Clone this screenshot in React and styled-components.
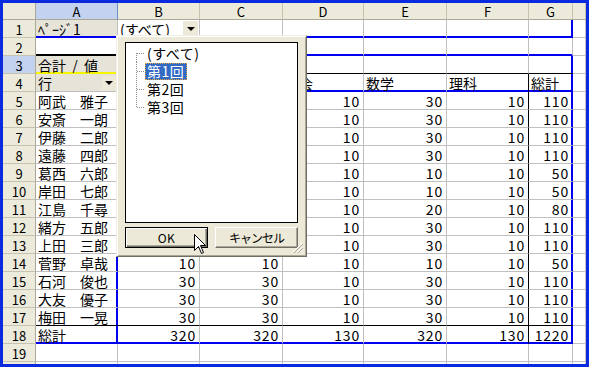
import React from "react";
import styled, { createGlobalStyle, css } from "styled-components";

const BLUE = "#0000ee";
const GRID = "#c0c0c0";
const HEAD_BG = "#ebeadb";
const FIELD_BG = "#e6e4d9";
const HILITE = "#c3d2ee";
const JP = `"Noto Sans CJK JP", "Liberation Sans", sans-serif`;

const GlobalStyle = createGlobalStyle`
  html, body {
    margin: 0;
    padding: 0;
    background: #fff;
  }
  body {
    font-family: ${JP};
    color: #000;
  }
`;

const Sheet = styled.div`
  position: relative;
  width: 589px;
  height: 367px;
  box-sizing: border-box;
  border: 3px solid #0a2ae0;
  display: grid;
  grid-template-columns: 33px 82px 82px 83px 81px 83px 82px 44px 1fr;
  grid-template-rows: 17px repeat(19, 18px) 1fr;
  overflow: hidden;
  background: #fff;
`;

const Corner = styled.div`
  box-sizing: border-box;
  background: ${HEAD_BG};
  border-right: 1px solid #aca899;
  border-bottom: 1px solid #aca899;
`;

const ColHead = styled.div`
  box-sizing: border-box;
  display: flex;
  align-items: center;
  justify-content: center;
  background: ${(p) => (p.$active ? HILITE : HEAD_BG)};
  border-right: 1px solid ${(p) => (p.$active ? "#6d8fc9" : "#c5c2b2")};
  border-bottom: 1px solid #aca899;
  font-size: 13px;
  line-height: 15px;
  padding-top: 1px;
`;

const RowHead = styled.div`
  box-sizing: border-box;
  display: flex;
  align-items: center;
  justify-content: center;
  background: ${(p) => (p.$active ? HILITE : HEAD_BG)};
  border-right: 1px solid #aca899;
  border-bottom: 1px solid #c5c2b2;
  font-size: 13px;
  line-height: 15px;
  padding-top: 2px;
  overflow: hidden;
`;

const edgeShadow = ({ $b, $r }) => {
  const s = [];
  if ($b && $b[1] > 1) s.push(`inset 0 -${$b[1] - 1}px 0 ${$b[0]}`);
  if ($r && $r[1] > 1) s.push(`inset -${$r[1] - 1}px 0 0 ${$r[0]}`);
  return s.length
    ? css`
        box-shadow: ${s.join(", ")};
      `
    : "";
};

const Cell = styled.div`
  box-sizing: border-box;
  display: flex;
  align-items: center;
  justify-content: ${(p) => (p.$num ? "flex-end" : "flex-start")};
  gap: 2px;
  background: ${(p) => (p.$field ? FIELD_BG : "#fff")};
  border-right: 1px solid ${(p) => (p.$r ? p.$r[0] : GRID)};
  border-bottom: 1px solid ${(p) => (p.$b ? p.$b[0] : GRID)};
  padding: 1px ${(p) => (p.$drop ? 1 : 3)}px 0 2px;
  font-size: 14px;
  line-height: 16px;
  letter-spacing: ${(p) => (p.$num ? "0.8px" : "0")};
  white-space: pre;
  overflow: hidden;
  ${edgeShadow}
`;

const CellText = styled.span`
  flex: ${(p) => (p.$grow ? 1 : "none")};
`;

const DropButton = styled.span`
  flex: none;
  width: ${(p) => p.$w}px;
  height: ${(p) => p.$h}px;
  margin-top: -1px;
  box-sizing: border-box;
  background: #ece9d8;
  display: flex;
  align-items: center;
  justify-content: center;
  &::after {
    content: "";
    border-left: 4px solid transparent;
    border-right: 4px solid transparent;
    border-top: 4px solid #000;
  }
`;

const Popup = styled.div`
  position: absolute;
  left: 113px;
  top: 32px;
  width: 191px;
  height: 222px;
  box-sizing: border-box;
  background: #ece9d8;
  border: 1px solid;
  border-color: #f1efe2 #716f64 #716f64 #f1efe2;
  box-shadow: inset 1px 1px 0 #fff, inset -1px -1px 0 #aca899;
  padding: 6px 8px 8px 8px;
  display: grid;
  grid-template-rows: 181px 21px;
  row-gap: 4px;
`;

const ListBox = styled.div`
  box-sizing: border-box;
  background: #fff;
  border: 1px solid #000;
  padding-top: 1px;
  display: flex;
  flex-direction: column;
`;

const TreeItem = styled.div`
  height: 18px;
  display: flex;
  align-items: center;
`;

const TreeLabel = styled.span`
  box-sizing: border-box;
  height: 17px;
  display: flex;
  align-items: center;
  padding: 0 2px 0 1px;
  font-size: 14px;
  line-height: 15px;
  letter-spacing: 0.5px;
  color: ${(p) => (p.$selected ? "#fff" : "#000")};
  background: ${(p) => (p.$selected ? "#316ac5" : "transparent")};
  border: 1px dotted ${(p) => (p.$selected ? "#e3a53a" : "transparent")};
`;

const Buttons = styled.div`
  display: grid;
  grid-template-columns: 1fr 1fr;
  column-gap: 7px;
`;

const Button = styled.button`
  box-sizing: border-box;
  margin: 0;
  padding: 0;
  background: #ece9d8;
  font-family: ${JP};
  font-size: 12px;
  line-height: 14px;
  letter-spacing: ${(p) => (p.$tight ? "-1px" : "0.5px")};
  color: #000;
  border: 1px solid;
  border-color: ${(p) =>
    p.$default ? "#000" : "#fff #716f64 #716f64 #fff"};
  box-shadow: ${(p) =>
    p.$default
      ? "inset 1px 1px 0 #fff, inset -1px -1px 0 #716f64, inset -2px -2px 0 #aca899"
      : "inset -1px -1px 0 #aca899"};
`;

const Grip = styled.svg`
  position: absolute;
  right: 3px;
  bottom: 3px;
`;

const Cursor = styled.svg`
  position: absolute;
  left: 191px;
  top: 231px;
`;

const people = [
  ["阿武　雅子", 30, 30, 10, 30, 10, 110],
  ["安斎　一朗", 30, 30, 10, 30, 10, 110],
  ["伊藤　二郎", 30, 30, 10, 30, 10, 110],
  ["遠藤　四郎", 30, 30, 10, 30, 10, 110],
  ["葛西　六郎", 10, 10, 10, 10, 10, 50],
  ["岸田　七郎", 10, 10, 10, 10, 10, 50],
  ["江島　千尋", 20, 20, 10, 20, 10, 80],
  ["緒方　五郎", 30, 30, 10, 30, 10, 110],
  ["上田　三郎", 30, 30, 10, 30, 10, 110],
  ["菅野　卓哉", 10, 10, 10, 10, 10, 50],
  ["石河　俊也", 30, 30, 10, 30, 10, 110],
  ["大友　優子", 30, 30, 10, 30, 10, 110],
  ["梅田　一晃", 30, 30, 10, 30, 10, 110],
];

const num = (v) => ({ t: v, num: true });

const sheet = [
  [{ t: "ﾍﾟｰｼﾞ1", field: true }, { t: "(すべて)", drop: [15, 15] }],
  [],
  [{ t: "合計  /  値", field: true }],
  [
    { t: "行", field: true, drop: [14, 14] },
    { t: "国語" },
    { t: "英語" },
    { t: "社会" },
    { t: "数学" },
    { t: "理科" },
    { t: "総計" },
  ],
  ...people.map(([name, ...vals]) => [{ t: name }, ...vals.map(num)]),
  [{ t: "総計" }, ...[320, 320, 130, 320, 130, 1220].map(num)],
  [],
  [],
];

const COLS = ["A", "B", "C", "D", "E", "F", "G", ""];

// pivot outline: which gridlines are drawn blue / black
const edges = (r, c) => {
  const e = {};
  if (c <= 6) {
    if (r === 1) e.b = [BLUE, 2];
    if (r === 2) e.b = c === 0 ? ["#000", 2] : [BLUE, 2];
    if (r === 3) e.b = c === 0 ? ["#f5f500", 2] : ["#000", 1];
    if (r === 4 && c > 0) e.b = [BLUE, 2];
    if (r === 17) e.b = ["#000", 1];
    if (r === 18) e.b = [BLUE, 2];
  }
  if (c === 0 && r >= 5 && r <= 18) e.r = [BLUE, 2];
  if (c === 5 && r >= 4 && r <= 18) e.r = ["#000", 1];
  if (c === 6 && (r === 1 || (r >= 3 && r <= 18))) e.r = [BLUE, 2];
  return e;
};

const Connector = ({ first, last }) => (
  <svg width="19" height="18" style={{ flex: "none" }}>
    <line
      x1="10.5"
      y1={first ? 9 : 0}
      x2="10.5"
      y2={last ? 10 : 18}
      stroke="#8c8c8c"
      strokeDasharray="1 1"
    />
    <line x1="11" y1="9.5" x2="19" y2="9.5" stroke="#8c8c8c" strokeDasharray="1 1" />
  </svg>
);

const items = ["(すべて)", "第1回", "第2回", "第3回"];

const App = () => {
  return (
    <>
      <GlobalStyle />
      <Sheet>
        <Corner />
        {COLS.map((c, i) => (
          <ColHead key={i} $active={c === "A"}>
            {c}
          </ColHead>
        ))}
        {sheet.map((row, ri) => {
          const r = ri + 1;
          return (
            <React.Fragment key={r}>
              <RowHead $active={r === 3}>{r <= 19 ? r : ""}</RowHead>
              {COLS.map((_, c) => {
                const cell = row[c] || {};
                const e = edges(r, c);
                return (
                  <Cell
                    key={c}
                    $num={cell.num}
                    $field={cell.field}
                    $drop={!!cell.drop}
                    $b={e.b}
                    $r={e.r}
                  >
                    {cell.t !== undefined && (
                      <CellText $grow={!!cell.drop}>{cell.t}</CellText>
                    )}
                    {cell.drop && <DropButton $w={cell.drop[0]} $h={cell.drop[1]} />}
                  </Cell>
                );
              })}
            </React.Fragment>
          );
        })}

        <Popup>
          <ListBox>
            {items.map((it, i) => (
              <TreeItem key={it}>
                <Connector first={i === 0} last={i === items.length - 1} />
                <TreeLabel $selected={i === 1}>{it}</TreeLabel>
              </TreeItem>
            ))}
          </ListBox>
          <Buttons>
            <Button $default>OK</Button>
            <Button $tight>キャンセル</Button>
          </Buttons>
          <Grip width="11" height="11" viewBox="0 0 11 11">
            <path d="M10 1 L1 10 M10 5 L5 10 M10 9 L9 10" stroke="#fff" strokeWidth="1" />
            <path d="M11 2 L2 11 M11 6 L6 11" stroke="#aca899" strokeWidth="1" />
          </Grip>
        </Popup>

        <Cursor width="13" height="21" viewBox="0 0 13 21">
          <path
            d="M0.5 0.5 L0.5 16.5 L4.5 12.5 L7.5 19.5 L9.5 18.5 L6.5 11.5 L11.5 11.5 Z"
            fill="#fff"
            stroke="#000"
            strokeWidth="1"
            strokeLinejoin="miter"
          />
        </Cursor>
      </Sheet>
    </>
  );
};

export default App;
